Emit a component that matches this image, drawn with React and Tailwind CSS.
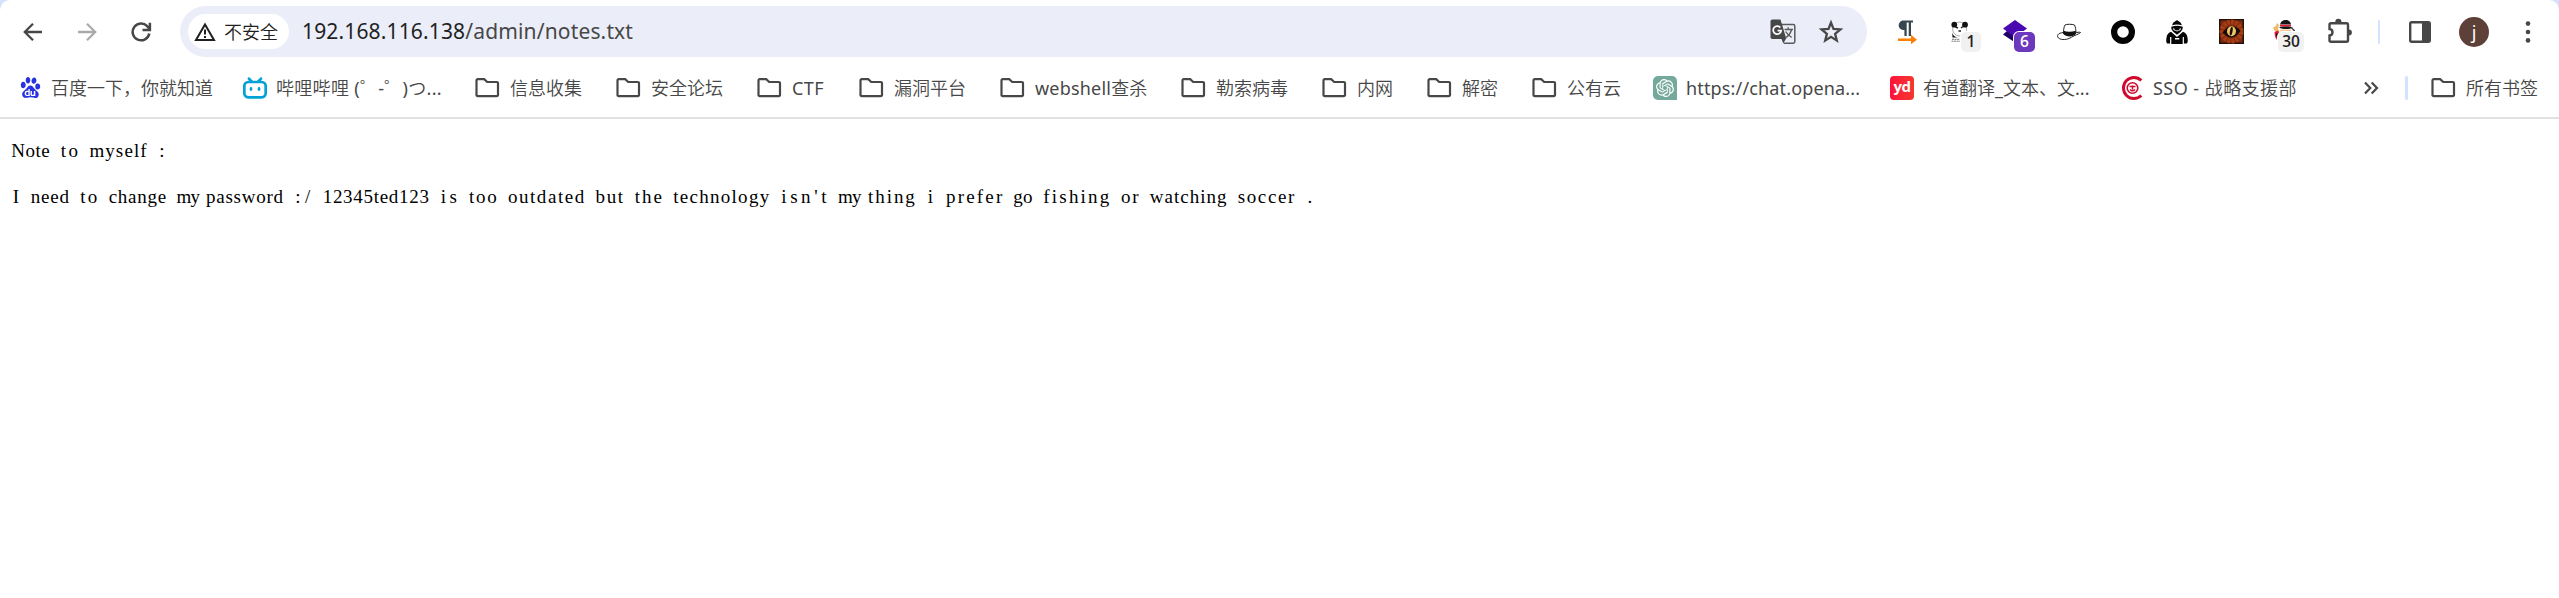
import React, { useLayoutEffect, useRef, useState } from "react";
import { SiBaidu, SiBilibili, SiOpenai } from "react-icons/si";

/* ---------- toolbar icons ---------- */

function BackIcon() {
    return (
        <svg className="w-6 h-6" viewBox="0 0 24 24" fill="none" stroke="#474747" strokeWidth="2.3">
            <path d="M21 12H4.5M12 3.8 3.8 12l8.2 8.2" />
        </svg>
    );
}

function ForwardIcon() {
    return (
        <svg className="w-6 h-6" viewBox="0 0 24 24" fill="none" stroke="#ababab" strokeWidth="2.3">
            <path d="M3 12h16.5M12 3.8l8.2 8.2-8.2 8.2" />
        </svg>
    );
}

function ReloadIcon() {
    return (
        <svg className="w-6 h-6" viewBox="0 0 24 24" fill="none" stroke="#474747" strokeWidth="2.5">
            <path d="M20.3 13.5A8.4 8.4 0 1 1 18.2 6.2L20.5 8.8" />
            <path d="M20.9 2.8v7.3h-7.4" />
        </svg>
    );
}

function WarningIcon() {
    return (
        <svg className="w-[22px] h-5" viewBox="0 0 22 20" fill="none" stroke="#1f1f1f">
            <path d="M11 2.6 20 18H2z" strokeWidth="2" />
            <path d="M11 7.5v5M11 14v2" strokeWidth="2" />
        </svg>
    );
}

function TranslateIcon() {
    return (
        <svg className="w-[26px] h-[26px]" viewBox="0 0 26 26">
            <path d="M11 5.6h12.2a1.6 1.6 0 0 1 1.6 1.6v15.4a1.6 1.6 0 0 1-1.6 1.6h-9.4" fill="none" stroke="#5a5a5a" strokeWidth="1.5" />
            <path d="M2.3.5h8.2l5.9 19.6H2.3A1.8 1.8 0 0 1 .5 18.3V2.3A1.8 1.8 0 0 1 2.3.5z" fill="#474747" />
            <path d="m11.500 20.100h4.300l-2.500 4.300z" fill="#474747" />
            <path d="M10.300 8.600a4 4 0 1 0 .9 3.100H7.600" fill="none" stroke="#fff" strokeWidth="1.700" />
            <path d="M14.500 10.500h8.500M18.200 8.300v2.200M21.500 10.500c-.7 3.500-3 6.300-5.500 8M15.700 12.500c1.300 2.500 3.500 4.500 6 6" fill="none" stroke="#5a5a5a" strokeWidth="1.400" />
        </svg>
    );
}

function StarIcon() {
    return (
        <svg className="w-[26px] h-[26px]" viewBox="0 0 26 26" fill="none" stroke="#474747" strokeWidth="2.3">
            <path d="m13 3.600 2.500 6.300 6.900.5-5.300 4.400 1.700 6.800-5.800-3.700-5.800 3.700 1.700-6.800-5.300-4.400 6.900-.5z" />
        </svg>
    );
}

function PilcrowIcon() {
    return (
        <svg className="w-6 h-6" viewBox="0 0 24 24">
            <path d="M7.500.6H18v2h-2V16h-2.300V2.600h-2V16H9.400V10A4.700 4.700 0 0 1 7.500.6z" fill="#37474f" />
            <path d="M3 18.400h13v-3.600l6 4.900-6 4.500V21H3z" fill="#ff8000" />
        </svg>
    );
}

function PandaIcon() {
    return (
        <svg className="w-6 h-6" viewBox="0 0 24 24">
            <ellipse cx="10.600" cy="9" rx="7" ry="7" fill="#fff" stroke="#777" strokeWidth=".6" />
            <circle cx="5.300" cy="4.700" r="2.900" fill="#111" />
            <circle cx="16" cy="4.700" r="2.900" fill="#111" />
            <path d="M6.500 7 9 8M14 6.500 12 8M9.500 11h2.500" stroke="#222" strokeWidth="1.500" />
            <path d="M3 10.500c0 4 2 6.500 6 7H3.500z" fill="#111" />
            <path d="M3 19.300h8M2.500 21.200h9" stroke="#777" strokeWidth="1" strokeDasharray="2 .6" />
        </svg>
    );
}

function LayersIcon() {
    return (
        <svg className="w-6 h-6" viewBox="0 0 24 24">
            <path d="M0 14.500 4 11l16 2-8 9.500z" fill="#1e0064" />
            <path d="M12 0 24 8.500 12 17.500 0 8.500z" fill="#4a08b0" />
        </svg>
    );
}

function HatIcon() {
    return (
        <svg className="w-[26px] h-6" viewBox="0 0 26 24">
            <path d="M7.500 12.500C1.500 13 .5 16 2.500 18c3 2.500 9 1.800 13-.8 3.500-2.200 6.500-2.500 9-4.700-1.500-.8-3.500 0-5 .5" fill="#fff" stroke="#222" strokeWidth="1" />
            <path d="M7.500 13.500c0-4 .5-7 1.500-8.500 1.500-1 7-1 9.500 0 1 2 1.500 5 1.500 8-2 3-9 3.500-12.500.5z" fill="#fff" stroke="#222" strokeWidth="1" />
            <path d="M7.500 10.800c4 1.500 8.500 1 12.300 0V14c-3.300 3.200-9 3.300-12.500 0z" fill="#111" />
        </svg>
    );
}

function RingIcon() {
    return (
        <svg className="w-6 h-6" viewBox="0 0 24 24">
            <circle cx="12" cy="12" r="8.900" fill="none" stroke="#050505" strokeWidth="6.200" />
        </svg>
    );
}

function HoodIcon() {
    return (
        <svg className="w-6 h-6" viewBox="0 0 24 24" fill="#050505">
            <path d="M12 0c1 1.300 4 1.500 4.800 5.200C14 4.300 10 4.300 7.200 5.200 8 1.500 11 1.300 12 0z" />
            <path d="M6.300 6.800c3.500-1.500 7.900-1.500 11.400 0 .3 2-.7 3.500-1.900 5L12 14.800 8.200 11.800c-1.200-1.500-2.200-3-1.900-5zM8 8.400c.3 1.600 1.200 2 2 2.200l2 .9 2-.9c.8-.2 1.700-.6 2-2.200-2-.6-6-.6-8 0z" fillRule="evenodd" />
            <path d="M9 8c2-.5 4-.5 6 0-.3 1.500-1 2.300-3 2.500C10 10.300 9.300 9.500 9 8z" />
            <path d="m6 11.800 6 5.200 6-5.200c3 1 4.300 3.200 4.600 6.700.2 2 .5 3.500-.7 5h-3V17h-1.200v7H6.300v-7H5.100v6.500h-3c-1.200-1.500-.9-3-.7-5 .3-3.500 1.600-5.700 4.600-6.700zM10 18v1.600h4.300V18z" fillRule="evenodd" />
        </svg>
    );
}

function DragonEyeIcon() {
    return (
        <svg className="w-[25px] h-[25px]" viewBox="0 0 25 25">
            <rect width="25" height="25" fill="#24100c" />
            <rect x="1.500" y="1.500" width="22" height="22" fill="#7c2a10" />
            <circle cx="12.500" cy="12.500" r="9.500" fill="none" stroke="#a63c14" strokeWidth="5" strokeDasharray="3 1" />
            <path d="M3.500 13.500C7 9 9 7.500 12.500 7c4 0 7 2.500 9 4.500-2 4-5 6.500-9 7-3.500 0-6-2-9-5z" fill="#180a08" />
            <ellipse cx="12.500" cy="12.300" rx="4.500" ry="5" fill="#ecc56a" />
            <ellipse cx="12.300" cy="12.300" rx="1.300" ry="4.300" fill="#1a0b05" transform="rotate(10 12 12)" />
        </svg>
    );
}

function DetectiveIcon() {
    return (
        <svg className="w-6 h-6" viewBox="0 0 24 24">
            <path d="M0 7.500 3 6l1-3 2 2-1 4 2 4-4-1-2-2z" fill="#f0b96a" />
            <path d="M1.500 12 5 10.500 7 14l-1 6H4c-2-2-2.500-5-2.500-8z" fill="#d8203a" />
            <path d="M3 13c0 3 1 6 3 7v-6z" fill="#111" />
            <path d="M7 9.500h11v4H8z" fill="#f7c98f" />
            <path d="M7 4.500C8 1 10 0 12.500 0 15.500 0 17.500 1.500 18 4.500z" fill="#151515" />
            <path d="M7 4.800h11v1.800H7z" fill="#e11d36" />
            <path d="M6 7.500c3-1.500 11-1.500 14 .2-4 1.800-10 1.800-14-.2z" fill="#151515" />
            <path d="M18.500 8c2 1 3 2.500 3.500 5" stroke="#222" fill="none" strokeWidth="1.200" />
        </svg>
    );
}

function PuzzleIcon() {
    return (
        <svg className="w-[27px] h-[27px]" viewBox="0 0 27 27">
            <path d="M5 5.200h15.500a1.500 1.500 0 0 1 1.500 1.500v15.500a1.500 1.500 0 0 1-1.500 1.500H5a1.500 1.500 0 0 1-1.500-1.500v-4.700c1.800-.2 3-1.600 3-3.300s-1.200-3-3-3.200V6.700A1.500 1.500 0 0 1 5 5.200z" fill="none" stroke="#474747" strokeWidth="2.400" />
            <path d="M9.300 5V3.900a3.100 3.100 0 0 1 6.200 0V5zM22.500 11.400h.4a3 3 0 0 1 0 6h-.4z" fill="#474747" />
        </svg>
    );
}

function SidePanelIcon() {
    return (
        <svg className="w-[22px] h-[22px]" viewBox="0 0 22 22">
            <rect x="1.200" y="1.200" width="19.600" height="19.600" rx="1.500" fill="none" stroke="#474747" strokeWidth="2.400" />
            <path d="M13 1h7v20h-7z" fill="#474747" />
        </svg>
    );
}

function MenuDots() {
    return (
        <svg className="w-6 h-6" viewBox="0 0 24 24" fill="#474747">
            <circle cx="12" cy="3.600" r="2.300" />
            <circle cx="12" cy="12" r="2.300" />
            <circle cx="12" cy="20.400" r="2.300" />
        </svg>
    );
}

/* ---------- bookmark icons ---------- */

function FolderIcon() {
    return (
        <svg className="w-[26px] h-6 mr-px shrink-0" viewBox="0 0 26 24">
            <path d="M3.700 3.200h6.500l3 2.800h9.600a1.200 1.200 0 0 1 1.200 1.200v11.700a1.200 1.200 0 0 1-1.200 1.200H3.700a1.200 1.200 0 0 1-1.200-1.200V4.400a1.200 1.200 0 0 1 1.200-1.200z" fill="none" stroke="#474747" strokeWidth="2.200" />
        </svg>
    );
}

function ChatIcon() {
    return (
        <span className="w-6 h-6 shrink-0 rounded-[5px] rounded-br-none bg-[#75a99c] flex items-center justify-center">
            <SiOpenai className="w-[18px] h-[18px] text-white" />
        </span>
    );
}

function YoudaoIcon() {
    return (
        <span className="w-6 h-6 shrink-0 rounded-[4px] bg-gradient-to-r from-[#fb0f3a] to-[#f8352f] flex items-center justify-center text-white font-bold text-[15px] leading-none tracking-[-0.5px] pb-[2px] font-['Open_Sans',sans-serif]">
            yd
        </span>
    );
}

function SsoIcon() {
    return (
        <svg className="w-6 h-6 shrink-0" viewBox="0 0 24 24" fill="none" stroke="#cf0a2c">
            <path d="M21.300 4.500A10.500 10.500 0 1 0 21.300 19.500" strokeWidth="2.900" />
            <circle cx="12.500" cy="12" r="5.300" strokeWidth="1.600" />
            <path d="M9.500 10.500h6M10 13.500c1.500 1.500 3.500 1.500 5 0M12.500 9.500v4" strokeWidth="1.400" />
        </svg>
    );
}

const bookmarks = [
    { label: "百度一下，你就知道", icon: <SiBaidu className="w-[21px] h-[21px] mx-[1.5px] shrink-0 text-[#2932e1]" />, width: "w-[225px]" },
    { label: "哔哩哔哩 (゜-゜)つ...", icon: <SiBilibili className="w-6 h-6 shrink-0 text-[#00a1d6]" />, width: "w-[231px]", tracking: "tracking-[0.3px]" },
    { label: "信息收集", width: "w-[141px]" },
    { label: "安全论坛", width: "w-[141px]" },
    { label: "CTF", width: "w-[102px]", tracking: "tracking-[0.4px]" },
    { label: "漏洞平台", width: "w-[141px]" },
    { label: "webshell查杀", width: "w-[181px]", tracking: "tracking-[0.2px]" },
    { label: "勒索病毒", width: "w-[141px]" },
    { label: "内网", width: "w-[105px]" },
    { label: "解密", width: "w-[105px]" },
    { label: "公有云", width: "w-[122px]" },
    { label: "https://chat.opena...", icon: <ChatIcon />, width: "w-[237px]", tracking: "tracking-[0.15px]" },
    { label: "有道翻译_文本、文...", icon: <YoudaoIcon />, width: "w-[230px]" },
    { label: "SSO - 战略支援部", icon: <SsoIcon />, width: "w-[231px]", tracking: "tracking-[0.45px]" },
];

const extensions = [
    { name: "pilcrow", icon: <PilcrowIcon /> },
    { name: "panda", icon: <PandaIcon />, badge: "1", badgeClass: "left-[27px] w-5 bg-[#f1f1f1] text-[#1f1f1f]" },
    { name: "layers", icon: <LayersIcon />, badge: "6", badgeClass: "left-[26px] w-[21px] bg-[#6c38bd] text-white" },
    { name: "hat", icon: <HatIcon /> },
    { name: "ring", icon: <RingIcon /> },
    { name: "hood", icon: <HoodIcon /> },
    { name: "eye", icon: <DragonEyeIcon /> },
    { name: "detective", icon: <DetectiveIcon />, badge: "30", badgeClass: "left-5 w-[26px] bg-[#f1f1f1] text-[#1f1f1f]" },
    { name: "puzzle", icon: <PuzzleIcon /> },
];

const lines = [
    "Note to myself :",
    "",
    "I need to change my password :/ 12345ted123 is too outdated but the technology isn't my thing i prefer go fishing or watching soccer .",
];

// width of one column of the text file
const CELL = 9.73;

function Slot({ children }) {
    return <div className="relative w-[54px] h-full shrink-0 flex items-center justify-center">{children}</div>;
}

function Bookmark({ label, icon, width = "", tracking = "" }) {
    return (
        <div className={`${width} shrink-0 flex items-center gap-[9px] whitespace-nowrap`}>
            {icon || <FolderIcon />}
            <span className={`pt-px ${tracking}`}>{label}</span>
        </div>
    );
}

// spreads a word of the serif face over its monospace columns
function Word({ text }) {
    const ref = useRef(null);
    const [spacing, setSpacing] = useState(0);

    useLayoutEffect(() => {
        const natural = ref.current.getBoundingClientRect().width;
        setSpacing(Math.max((text.length * CELL - natural) / text.length, -0.6));
    }, [text]);

    return (
        <span className="inline-block" style={{ width: (text.length + 1) * CELL, paddingLeft: Math.max(spacing / 2, 0) }}>
            <span ref={ref} style={{ letterSpacing: spacing }}>{text}</span>{" "}
        </span>
    );
}

function App() {
    return (
        <div className="w-[2559px] h-[598px] bg-[#d3e3fd] overflow-hidden">
            <div className="h-full bg-white rounded-t-[10px] font-['Noto_Sans','Noto_Sans_CJK_SC_DemiLight','Noto_Sans_CJK_SC_Light','Noto_Sans_CJK_SC',sans-serif]">

                {/* Toolbar */}
                <header className="h-[63px] pl-[6px] flex items-center">
                    <Slot><BackIcon /></Slot>
                    <Slot><ForwardIcon /></Slot>
                    <Slot><ReloadIcon /></Slot>

                    {/* Address bar */}
                    <div className="ml-3 w-[1687px] h-[51px] shrink-0 rounded-full bg-[#ebeef8] pl-2 pr-[23px] flex items-center">
                        <div className="h-[35px] w-[101px] rounded-full bg-white pl-[6px] flex items-center gap-2 text-lg leading-none text-[#1f1f1f]">
                            <WarningIcon />
                            <span className="whitespace-nowrap pt-px">不安全</span>
                        </div>
                        <div className="ml-[13px] flex-1 text-[21px] leading-none tracking-[0.15px] text-[#474747]">
                            <span className="text-[#1f1f1f]">192.168.116.138</span>/admin/notes.txt
                        </div>
                        <div className="flex items-center gap-[22px]">
                            <TranslateIcon />
                            <StarIcon />
                        </div>
                    </div>

                    {/* Extensions */}
                    <div className="ml-[13px] h-full flex">
                        {extensions.map(ext => (
                            <Slot key={ext.name}>
                                {ext.icon}
                                {ext.badge && (
                                    <span className={`absolute top-8 h-5 rounded-[5px] ring-1 ring-white flex items-center justify-center text-[15.5px] leading-none font-semibold font-['Open_Sans',sans-serif] ${ext.badgeClass}`}>
                                        {ext.badge}
                                    </span>
                                )}
                            </Slot>
                        ))}
                    </div>

                    <div className="ml-3 mr-[13px] w-[2px] h-6 bg-[#d3e3fd] rounded-full" />

                    <Slot><SidePanelIcon /></Slot>
                    <Slot>
                        <span className="w-[30px] h-[30px] rounded-full bg-[#5d4037] text-white text-lg leading-none flex items-center justify-center">j</span>
                    </Slot>
                    <Slot><MenuDots /></Slot>
                </header>

                {/* Bookmarks bar */}
                <nav className="h-[56px] pb-[5px] border-b-2 border-[#e1e1e1] pl-[18px] flex items-center text-lg leading-none text-[#474747]">
                    {bookmarks.map(b => (
                        <Bookmark key={b.label} {...b} />
                    ))}
                    <svg className="ml-[12px] w-4 h-4 shrink-0" viewBox="0 0 16 16" fill="none" stroke="#474747" strokeWidth="2.200">
                        <path d="m2 2.500 5.300 5.500L2 13.500M8.700 2.500 14 8l-5.300 5.500" />
                    </svg>
                    <div className="ml-[26px] mr-[22px] w-[3px] h-6 bg-[#d3e3fd] rounded-full shrink-0" />
                    <Bookmark label="所有书签" />
                </nav>

                {/* File contents */}
                <pre className="m-0 pl-[11px] pt-5 text-[19px] leading-[23px] text-black font-['Liberation_Serif',serif]">
                    {lines.map((line, i) => (
                        <div key={i} className="h-[23px]">
                            {line && line.split(" ").map((word, j) => <Word key={j} text={word} />)}
                        </div>
                    ))}
                </pre>
            </div>
        </div>
    );
}

export default App;
